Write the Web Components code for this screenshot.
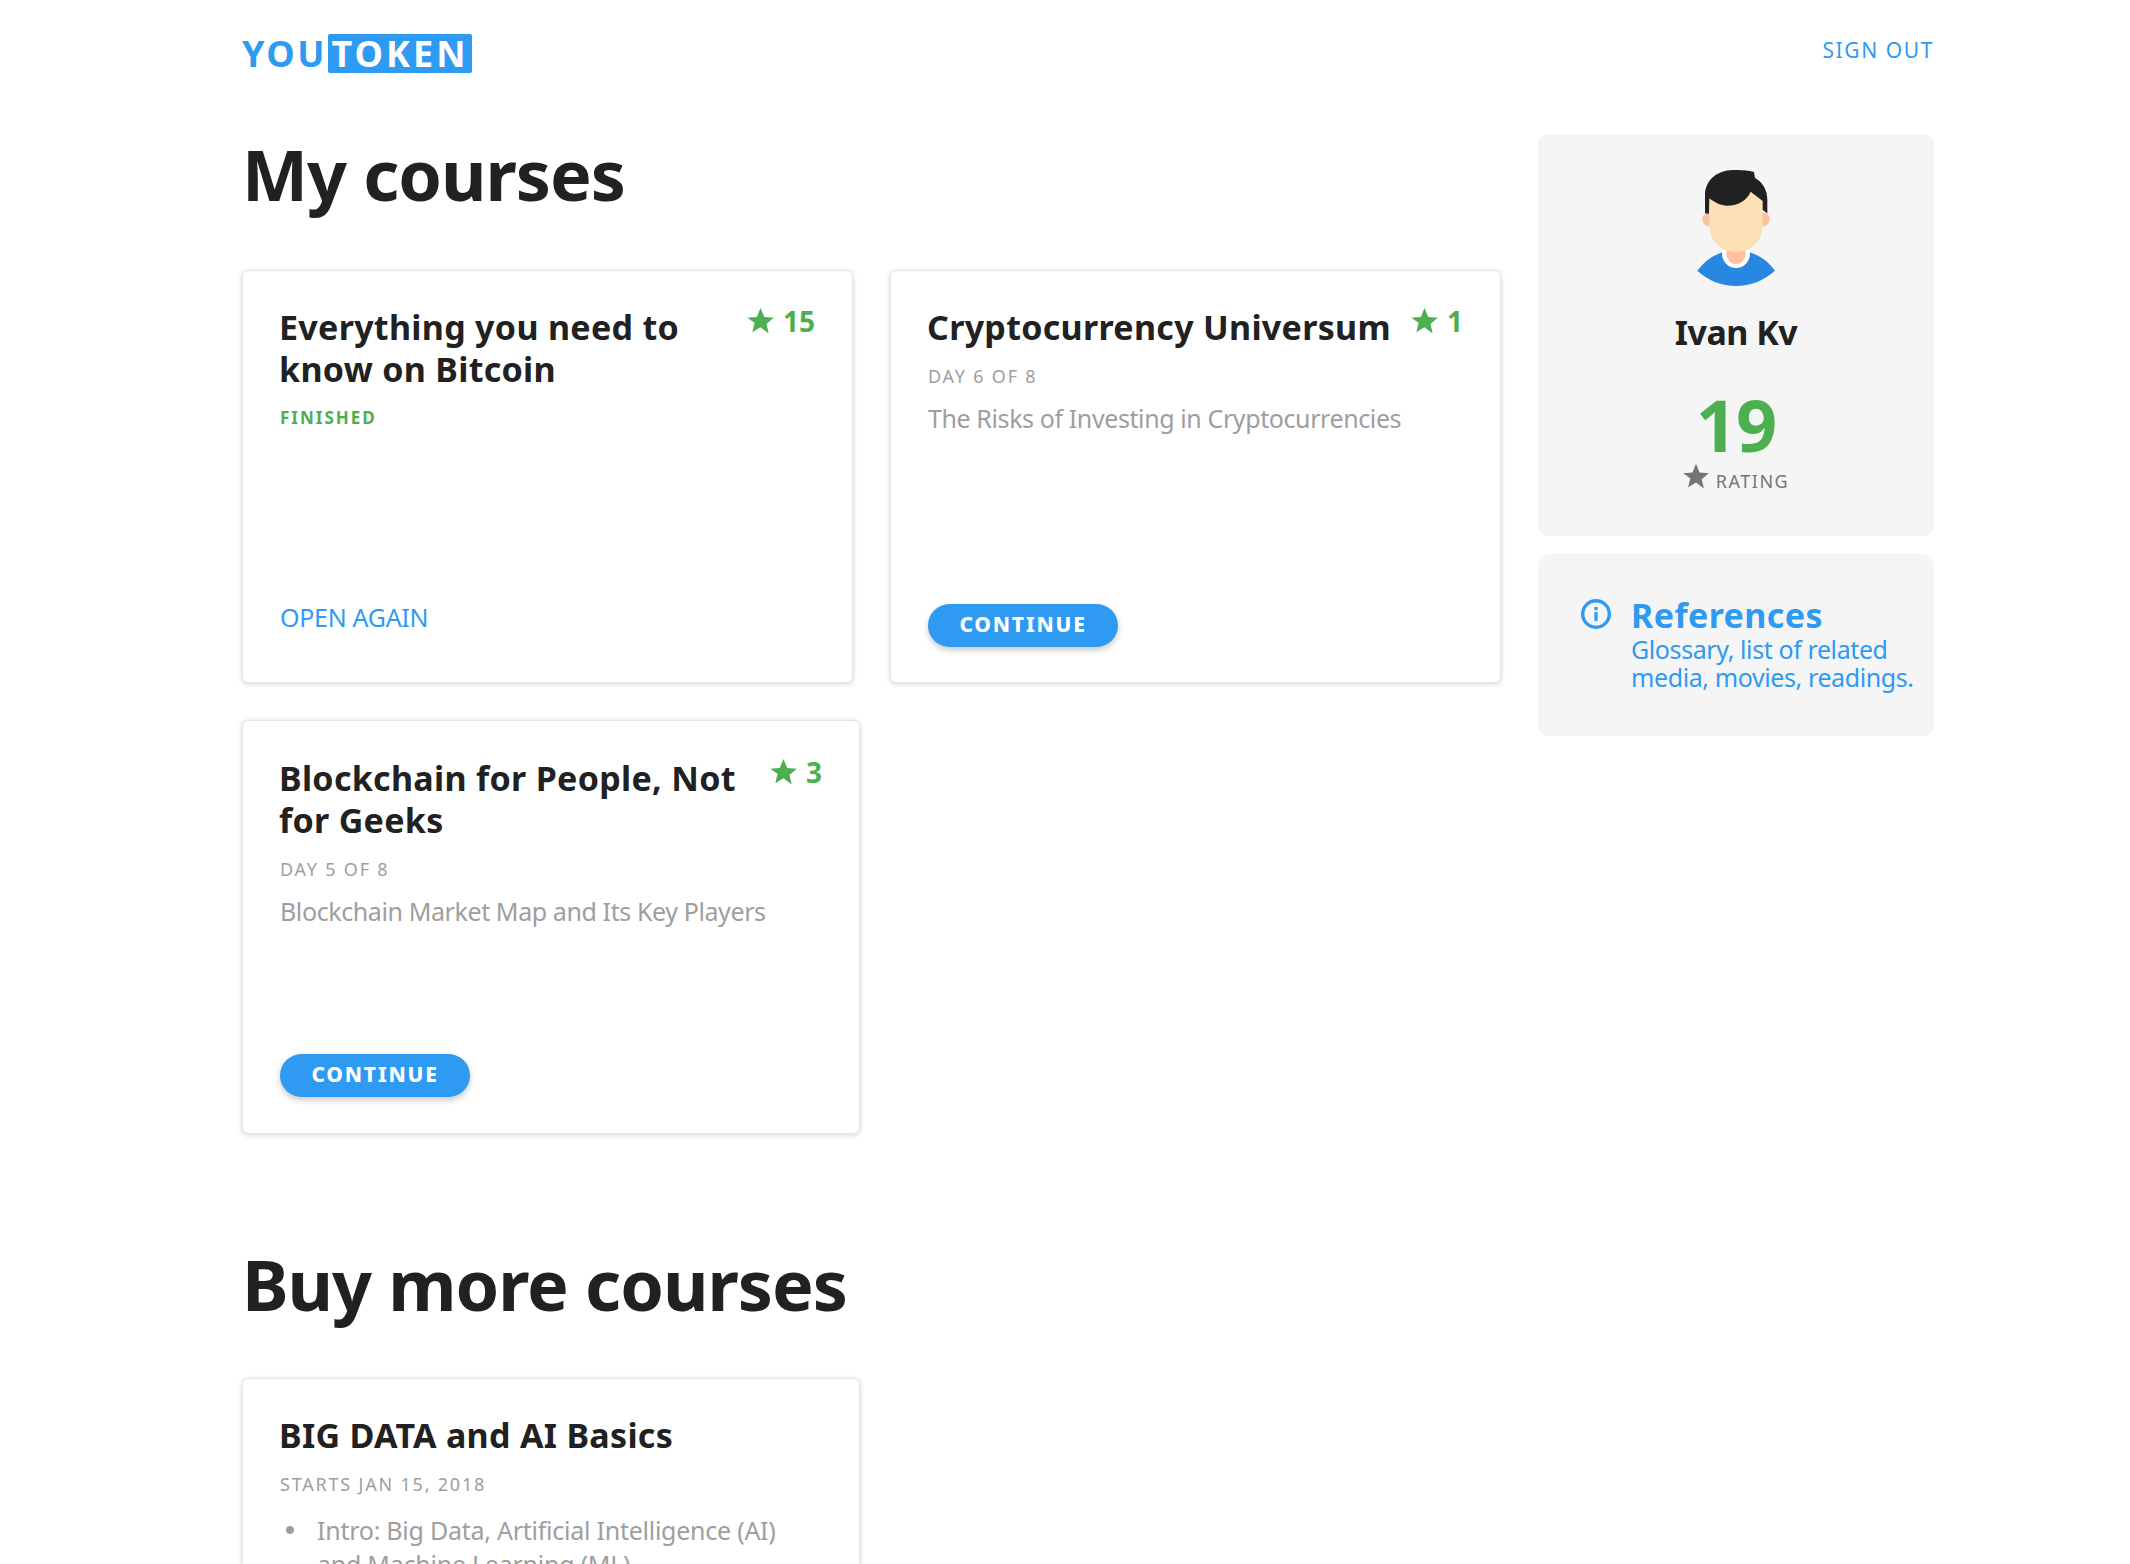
<!DOCTYPE html>
<html>
<head>
<meta charset="utf-8">
<title>YouToken</title>
<style>
  html, body { margin: 0; height: 1564px; overflow: hidden; background: #fff; }
  body { font-family: "Noto Sans", "Open Sans", sans-serif; color: #212121; }
</style>
</head>
<body>
<yt-page>
  <yt-header slot="header"></yt-header>
  <yt-heading>My courses</yt-heading>
  <course-list>
    <course-card width="611" score="15">
      <span slot="title">Everything you need to know on Bitcoin</span>
      <span slot="status">FINISHED</span>
      <yt-link slot="action">OPEN AGAIN</yt-link>
    </course-card>
    <course-card width="611" score="1">
      <span slot="title">Cryptocurrency Universum</span>
      <span slot="meta">DAY 6 OF 8</span>
      <span slot="text">The Risks of Investing in Cryptocurrencies</span>
      <yt-button slot="action">CONTINUE</yt-button>
    </course-card>
    <course-card class="tall" width="618" score="3">
      <span slot="title">Blockchain for People, Not for Geeks</span>
      <span slot="meta">DAY 5 OF 8</span>
      <span slot="text">Blockchain Market Map and Its Key Players</span>
      <yt-button slot="action">CONTINUE</yt-button>
    </course-card>
  </course-list>
  <yt-heading class="more">Buy more courses</yt-heading>
  <course-list>
    <course-card width="618">
      <span slot="title">BIG DATA and AI Basics</span>
      <span slot="meta">STARTS JAN 15, 2018</span>
      <course-topics slot="text">
        <li>Intro: Big Data, Artificial Intelligence (AI) and Machine Learning (ML)</li>
      </course-topics>
    </course-card>
  </course-list>
  <profile-card slot="side" name="Ivan Kv" rating="19"></profile-card>
  <reference-card slot="side"></reference-card>
</yt-page>

<script>
const STAR = '<svg viewBox="0 0 24 24" width="100%" height="100%"><path fill="currentColor" d="M12 .8l3.3 8 8.5.7-6.5 5.6 2 8.4L12 18l-7.3 4.5 2-8.4L.2 9.5l8.5-.7z"/></svg>';

window.customElements.define('yt-page', class extends HTMLElement {
  constructor() {
    super();
    const root = this.attachShadow({ mode: 'open' });
    root.innerHTML = `
    <style>
      :host { display: block; padding: 34px 196px 0 242px; }
      .columns { display: flex; gap: 37px; margin-top: 61px; }
      main { width: 1259px; flex: none; }
      aside { width: 396px; flex: none; display: flex; flex-direction: column; gap: 18px; }
    </style>
    <slot name="header"></slot>
    <div class="columns">
      <main><slot></slot></main>
      <aside><slot name="side"></slot></aside>
    </div>
    `
  }
});

window.customElements.define('yt-logo', class extends HTMLElement {
  constructor() {
    super();
    const root = this.attachShadow({ mode: 'open' });
    root.innerHTML = `
    <style>
      :host { display: flex; align-items: center; height: 39px; font-size: 36px; font-weight: 700; letter-spacing: 2.5px; color: #2f9af2; }
      .you { width: 86px; }
      .box { display: flex; align-items: center; justify-content: center; box-sizing: border-box; width: 144px; height: 39px; background: #2f9af2; color: #fff; border-radius: 2px; letter-spacing: 3px; }
    </style>
    <span class="you">YOU</span><span class="box">TOKEN</span>
    `
  }
});

window.customElements.define('yt-header', class extends HTMLElement {
  constructor() {
    super();
    const root = this.attachShadow({ mode: 'open' });
    root.innerHTML = `
    <style>
      :host { display: flex; justify-content: space-between; align-items: flex-start; }
      a { font-size: 21px; letter-spacing: 1.6px; line-height: 32px; color: #2f9af2; }
    </style>
    <yt-logo></yt-logo>
    <a>SIGN OUT</a>
    `
  }
});

window.customElements.define('yt-heading', class extends HTMLElement {
  constructor() {
    super();
    const root = this.attachShadow({ mode: 'open' });
    root.innerHTML = `
    <style>
      :host { display: block; height: 136px; font-size: 70px; line-height: 80px; font-weight: 700; color: #212121; letter-spacing: -1px; }
      :host(.more) { margin-top: 110px; height: 134px; }
    </style>
    <slot></slot>
    `
  }
});

window.customElements.define('course-list', class extends HTMLElement {
  constructor() {
    super();
    const root = this.attachShadow({ mode: 'open' });
    root.innerHTML = `
    <style>
      :host { display: flex; flex-wrap: wrap; gap: 37px; }
    </style>
    <slot></slot>
    `
  }
});

window.customElements.define('course-card', class extends HTMLElement {
  constructor() {
    super();
    const root = this.attachShadow({ mode: 'open' });
    const score = this.getAttribute('score');
    root.innerHTML = `
    <style>
      :host {
        display: flex; flex-direction: column; box-sizing: border-box;
        width: ${this.getAttribute('width')}px; height: 413px; padding: 35px 37px 35px 37px;
        background: #fff; border: 1px solid #e6e6e6; border-radius: 6px;
        box-shadow: 0 1px 5px rgba(0,0,0,.18);
      }
      :host(.tall) { height: 414px; padding-top: 36px; padding-bottom: 36px; }
      .head { display: flex; justify-content: space-between; gap: 14px; }
      .title { font-size: 34px; line-height: 42px; font-weight: 700; color: #212121; letter-spacing: 0.3px; margin-left: -1px; }
      .score { flex: none; display: flex; align-items: flex-start; gap: 9px; color: #4caf50; font-size: 28px; font-weight: 700; line-height: 32px; margin-top: -1px; }
      .score i { display: block; width: 27px; height: 27px; margin-top: 2px; }
      ::slotted([slot=status]) { display: block; margin-top: 16px; font-size: 17px; line-height: 24px; font-weight: 700; letter-spacing: 2px; color: #4caf50; }
      ::slotted([slot=meta]) { display: block; margin-top: 16px; font-size: 18px; line-height: 24px; letter-spacing: 1.8px; color: #9e9e9e; }
      ::slotted([slot=text]) { display: block; margin-top: 13px; font-size: 25px; line-height: 34px; color: #9e9e9e; letter-spacing: -0.4px; }
      .action { margin-top: auto; }
    </style>
    <div class="head">
      <div class="title"><slot name="title"></slot></div>
      ${score ? `<div class="score"><i>${STAR}</i>${score}</div>` : ''}
    </div>
    <slot name="status"></slot>
    <slot name="meta"></slot>
    <slot name="text"></slot>
    <div class="action"><slot name="action"></slot></div>
    `
  }
});

window.customElements.define('course-topics', class extends HTMLElement {
  constructor() {
    super();
    const root = this.attachShadow({ mode: 'open' });
    root.innerHTML = `
    <style>
      :host { display: block; margin-top: 17px !important; letter-spacing: -0.25px !important; }
      ul { margin: 0; padding: 0; list-style: none; }
      ::slotted(li) { display: flex; align-items: flex-start; padding-right: 10px; }
      ::slotted(li)::before { content: ""; flex: none; width: 8px; height: 8px; margin: 13px 23px 0 6px; border-radius: 50%; background: #9e9e9e; }
    </style>
    <ul><slot></slot></ul>
    `
  }
});

window.customElements.define('yt-button', class extends HTMLElement {
  constructor() {
    super();
    const root = this.attachShadow({ mode: 'open' });
    root.innerHTML = `
    <style>
      :host {
        display: flex; align-items: center; justify-content: center; box-sizing: border-box;
        width: 190px; height: 43px; padding-bottom: 3px; border-radius: 22px;
        background: #2f9af2; color: #fff; font-size: 21px; font-weight: 800; letter-spacing: 1.8px;
        box-shadow: 0 3px 6px rgba(0,0,0,.22);
      }
    </style>
    <slot></slot>
    `
  }
});

window.customElements.define('yt-link', class extends HTMLElement {
  constructor() {
    super();
    const root = this.attachShadow({ mode: 'open' });
    root.innerHTML = `
    <style>
      :host { display: block; font-size: 25px; line-height: 40px; color: #2f9af2; letter-spacing: -0.3px; margin-bottom: 10px; }
    </style>
    <slot></slot>
    `
  }
});

window.customElements.define('profile-card', class extends HTMLElement {
  constructor() {
    super();
    const root = this.attachShadow({ mode: 'open' });
    root.innerHTML = `
    <style>
      :host {
        display: flex; flex-direction: column; align-items: center; box-sizing: border-box;
        height: 402px; padding-top: 34px; background: #f5f5f5; border-radius: 10px;
      }
      svg.face { display: block; width: 80px; height: 120px; }
      .name { margin-top: 21px; font-size: 34px; line-height: 46px; font-weight: 700; color: #212121; letter-spacing: -0.5px; }
      .rating { margin-top: 27px; font-size: 72px; line-height: 84px; font-weight: 700; color: #4caf50; letter-spacing: -1px; }
      .label { display: flex; align-items: flex-start; gap: 7px; margin-top: 3px; color: #757575; font-size: 18px; line-height: 24px; letter-spacing: 1.5px; }
      .label i { display: block; width: 26px; height: 26px; margin-top: -6px; }
    </style>
    <svg class="face" viewBox="48 24 240 360">
      <path fill="#2787e3" d="M52 332C80 296 110 276 168 268c58 8 90 28 117 64-34 30-74 46-117 46s-83-16-116-46z"/>
      <ellipse cx="168" cy="280" rx="42" ry="44" fill="#fff"/>
      <ellipse cx="168" cy="278" rx="29" ry="34" fill="#ffc09f"/>
      <ellipse cx="83" cy="178" rx="16" ry="20" fill="#ffc09f"/>
      <ellipse cx="253" cy="178" rx="16" ry="20" fill="#ffc09f"/>
      <path fill="#fde0b5" d="M88 90h160v106c0 46-34 80-80 80s-80-34-80-80z"/>
      <path fill="#212121" d="M75 160V100C80 58 110 32 158 30c24 0 50 1 64 6l3 18c22 12 37 34 37 66v40l-14-10v-27l-36-28c-10 24-36 42-70 42-20 0-36-8-54-22l-1 46z"/>
    </svg>
    <div class="name">${this.getAttribute('name')}</div>
    <div class="rating">${this.getAttribute('rating')}</div>
    <div class="label"><i>${STAR}</i><span>RATING</span></div>
    `
  }
});

window.customElements.define('reference-card', class extends HTMLElement {
  constructor() {
    super();
    const root = this.attachShadow({ mode: 'open' });
    root.innerHTML = `
    <style>
      :host {
        display: flex; gap: 19px; box-sizing: border-box; height: 182px; padding: 41px 10px 0 42px;
        background: #f5f5f5; border-radius: 10px; color: #2f9af2;
      }
      svg { flex: none; display: block; width: 32px; height: 32px; margin-top: 3px; }
      h3 { margin: 0; font-size: 34px; line-height: 40px; font-weight: 700; letter-spacing: 0.4px; }
      p { margin: 0; font-size: 25px; line-height: 28px; letter-spacing: -0.4px; }
    </style>
    <svg viewBox="0 0 32 32"><circle cx="16" cy="16" r="13.3" fill="none" stroke="currentColor" stroke-width="3.4"/><rect x="14.4" y="14" width="3.2" height="9" fill="currentColor"/><rect x="14.4" y="9" width="3.2" height="3.2" fill="currentColor"/></svg>
    <div>
      <h3>References</h3>
      <p>Glossary, list of related<br>media, movies, readings.</p>
    </div>
    `
  }
});
</script>
</body>
</html>
